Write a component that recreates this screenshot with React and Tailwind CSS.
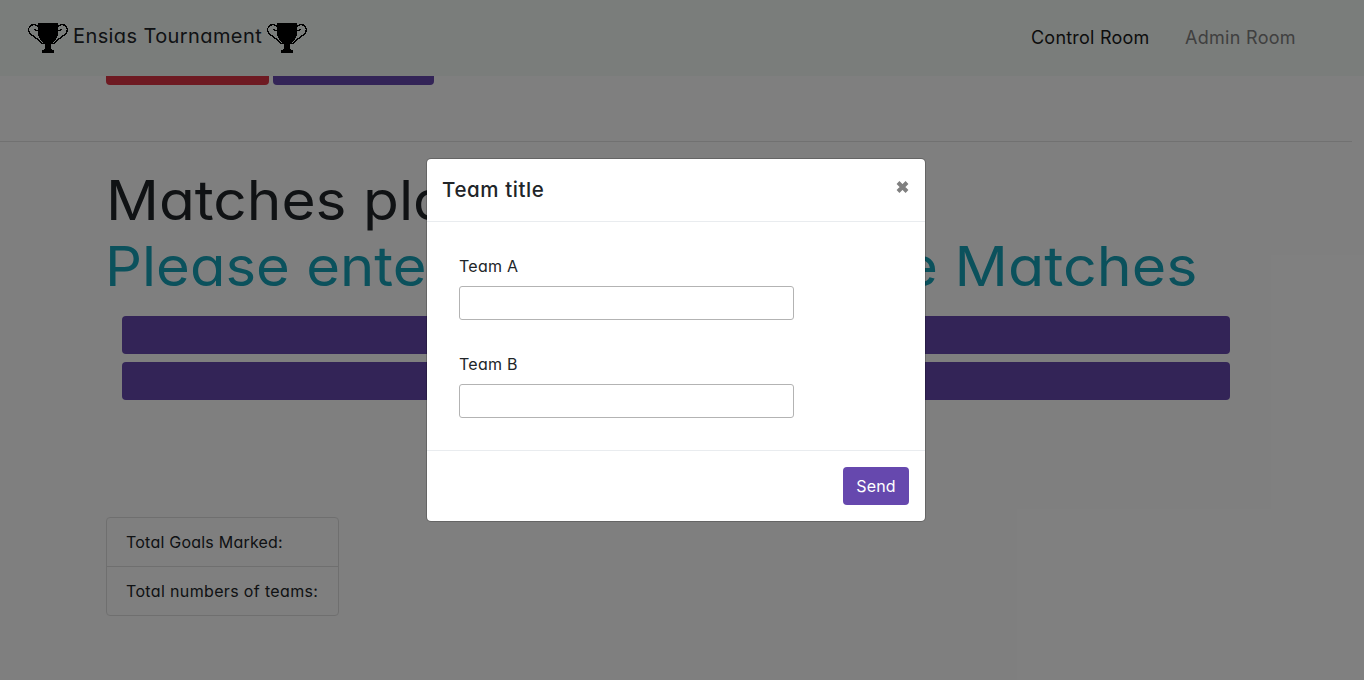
function Trophy() {
  return (
    <svg className="h-[30px] w-10 shrink-0" viewBox="0 0 40 30" fill="none" stroke="#000" shapeRendering="crispEdges">
      <path fill="#000" stroke="none" d="M10 0h20v10c0 3-1 5.500-3 7.500-2 2.200-3.500 3-4 4v4l1 1.500h2V30H14v-3h2l1-1.500v-4c-.5-1-2-1.800-4-4-2-2-3-4.500-3-7.500z" />
      <path strokeWidth="1.400" d="M10.500 3.800C8.500 1.300 5 1 2.700 2.700.3 4.500.2 7.700 2 10.200c1.800 2.500 5 4 8 6.500 2.500 2 4 3.500 5.500 4.500M10 7c-1 1.300-3 1-3.200-1" />
      <path strokeWidth="1.400" d="M29.500 3.800C31.500 1.300 35 1 37.300 2.700c2.400 1.800 2.500 5 .7 7.500-1.800 2.500-5 4-8 6.500-2.500 2-4 3.500-5.500 4.500M30 7c1 1.300 3 1 3.200-1" />
    </svg>
  );
}

function Field({ label }) {
  return (
    <label className="block">
      <span className="block h-6 text-[16px] leading-6 tracking-[0.25px]">{label}</span>
      <input className="mt-2 block h-[34px] w-[335px] rounded-[3px] border border-[#b3b3b3] bg-white px-2 outline-none" />
    </label>
  );
}

function Navbar() {
  return (
    <nav className="flex h-[76px] items-center justify-between bg-[#f5faf7] pr-[68px] pl-[28px]">
      <div className="flex items-center">
        <Trophy />
        <span className="-mt-1 mr-1 ml-[5px] w-[190px] whitespace-nowrap text-[20px] leading-[30px] tracking-[0.4px] text-[#212529]">Ensias Tournament</span>
        <Trophy />
      </div>
      <div className="flex text-[18px] leading-7">
        <a className="w-[154px] whitespace-nowrap tracking-[0.22px] text-[#1a1a1a]">Control Room</a>
        <a className="w-[111px] whitespace-nowrap tracking-[0.3px] text-[#808080]">Admin Room</a>
      </div>
    </nav>
  );
}

export default function App() {
  return (
    <div className="relative h-[680px] w-full overflow-hidden bg-white text-[#212529] [font-family:Inter,sans-serif] [font-feature-settings:'cv11'] [font-optical-sizing:none]">
      <Navbar />
      <div className="flex h-[9px] gap-1 pl-[106px]">
        <div className="w-[163px] rounded-b bg-[#dc3545]" />
        <div className="w-[161px] rounded-b bg-[#6648ae]" />
      </div>
      <hr className="mt-14 w-[1352px] border-t border-[#e3e3e3]" />
      <main className="pl-[106px]">
        <h1 className="mt-[25px] h-[67px] whitespace-nowrap text-[55px] font-[380] leading-[67px]">
          <span className="inline-block origin-left scale-x-[1.065]">Matches pla</span>
        </h1>
        <h1 className="-mt-px flex h-[67px] w-[1091px] justify-between whitespace-nowrap text-[55px] font-[380] leading-[67px] text-[#17a2b8]">
          <span className="-ml-px origin-left scale-x-[1.055]">Please ente</span>
          <span className="origin-right scale-x-[1.075]">e Matches</span>
        </h1>
        <div className="mt-[16px] ml-4 flex w-[1108px] flex-col gap-2">
          <div className="h-[38px] rounded bg-[#6648ae]" />
          <div className="h-[38px] rounded bg-[#6648ae]" />
        </div>
        <ul className="mt-[117px] w-[233px] rounded border border-[#dfdfdf] text-[16px]">
          <li className="h-[49px] whitespace-nowrap border-b border-[#dfdfdf] pl-[19px] leading-[48px] tracking-[0.22px]">Total Goals Marked:</li>
          <li className="h-12 whitespace-nowrap pl-[19px] leading-[48px] tracking-[0.35px]">Total numbers of teams:</li>
        </ul>
      </main>

      <div className="absolute inset-0 flex items-start justify-center bg-black/50 pt-[158px] pr-3">
        <section className="w-[500px] rounded-[5px] border border-black/20 bg-white bg-clip-padding">
          <header className="flex h-[63px] items-start justify-between border-b border-[#e9ecef] px-4 pt-4">
            <h5 className="-ml-px text-[20.500px] font-medium leading-[30px] tracking-[0.6px]">Team title</h5>
            <button className="mt-[5px] text-[#808080]">
              <svg width="13" height="14" viewBox="0 0 13 14">
                <path d="M2 2.500l9 9m0-9l-9 9" stroke="currentColor" strokeWidth="4" />
              </svg>
            </button>
          </header>
          <div className="flex h-[228px] flex-col gap-8 px-8 pt-8">
            <Field label="Team A" />
            <Field label="Team B" />
          </div>
          <footer className="flex h-[71px] justify-end border-t border-[#e9ecef] px-4 pt-4">
            <button className="h-[38px] w-[66px] rounded bg-[#6648ae] text-[16px] tracking-[0.2px] text-white">Send</button>
          </footer>
        </section>
      </div>
    </div>
  );
}
